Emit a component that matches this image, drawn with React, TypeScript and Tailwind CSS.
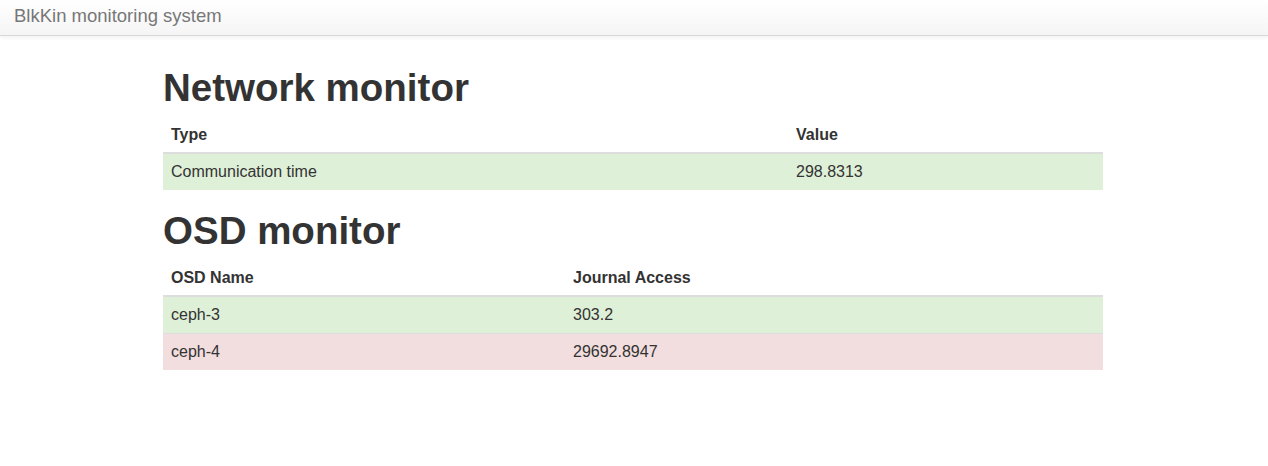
export default function App() {
  const font = { fontFamily: '"Liberation Sans", Arial, sans-serif' };

  return (
    <div className="min-h-[466px] bg-white text-[#333] text-[16px] leading-[20px]" style={font}>
      <nav className="h-[36px] border-b border-[#d8d8d8] bg-gradient-to-b from-white to-[#f5f5f5] shadow-[0_1px_5px_rgba(0,0,0,0.075)]">
        <div className="px-[14px] pt-[4px] text-[18.5px] leading-[24px] text-[#777]">BlkKin monitoring system</div>
      </nav>

      <div className="mx-auto w-[940px] translate-x-[-1px]">
        <h1 className="mt-[32px] mb-[8px] text-[38.5px] leading-[40px] font-bold">Network monitor</h1>
        <table className="mb-[21px] w-full border-collapse">
          <thead>
            <tr>
              <th className="w-[625px] border-b-2 border-[#ddd] px-[8px] pt-[9px] pb-[7px] text-left font-bold">Type</th>
              <th className="border-b-2 border-[#ddd] px-[8px] pt-[9px] pb-[7px] text-left font-bold">Value</th>
            </tr>
          </thead>
          <tbody>
            <tr className="bg-[#dff0d8]">
              <td className="p-[8px]">Communication time</td>
              <td className="p-[8px]">298.8313</td>
            </tr>
          </tbody>
        </table>

        <h1 className="mt-0 mb-[8px] text-[38.5px] leading-[40px] font-bold">OSD monitor</h1>
        <table className="mb-[20px] w-full border-collapse">
          <thead>
            <tr>
              <th className="w-[402px] border-b-2 border-[#ddd] px-[8px] pt-[9px] pb-[7px] text-left font-bold">OSD Name</th>
              <th className="border-b-2 border-[#ddd] px-[8px] pt-[9px] pb-[7px] text-left font-bold">Journal Access</th>
            </tr>
          </thead>
          <tbody>
            <tr className="bg-[#dff0d8]">
              <td className="p-[8px]">ceph-3</td>
              <td className="p-[8px]">303.2</td>
            </tr>
            <tr className="bg-[#f2dede]">
              <td className="border-t border-[#ddd] p-[8px]">ceph-4</td>
              <td className="border-t border-[#ddd] p-[8px]">29692.8947</td>
            </tr>
          </tbody>
        </table>
      </div>
    </div>
  );
}
